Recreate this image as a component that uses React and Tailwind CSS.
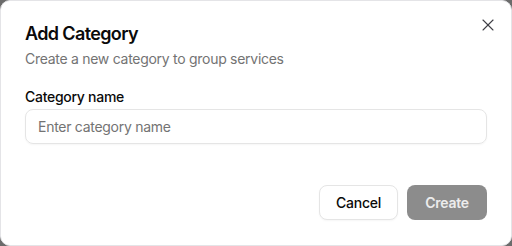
import React from "react";
import { X } from "lucide-react";

export default function App() {
  return (
    <div className="w-[512px] h-[246px] bg-[#6b6b6b]" style={{ fontFamily: "Inter, 'Liberation Sans', sans-serif" }}>
      <div className="relative w-full h-full bg-white rounded-[10px] border border-[#e4e4e7] flex flex-col px-6 pt-[20px] pb-[25px]">
        <button className="absolute right-[13px] top-[14px] text-[#3f3f46]">
          <X size={20} strokeWidth={1.3} />
        </button>
        <h2 className="text-[18px] leading-[26px] font-semibold text-[#0a0a0a] tracking-[-0.035em]">Add Category</h2>
        <p className="mt-[2px] text-[14px] leading-[20px] text-[#737373] tracking-[-0.02em]">Create a new category to group services</p>
        <label className="mt-[18px] text-[14px] leading-[20px] font-medium text-[#0a0a0a] tracking-[-0.02em]">Category name</label>
        <div className="mt-[2px] h-[35px] rounded-[8px] border border-[#e5e5e5] flex items-center px-3 text-[14px] text-[#737373] tracking-[-0.02em] shadow-[0_1px_2px_rgba(0,0,0,0.04)]">
          Enter category name
        </div>
        <div className="mt-auto flex justify-end gap-[9px]">
          <button className="h-[35px] w-[79px] rounded-[8px] border border-[#e5e5e5] bg-white text-[14px] font-medium text-[#0a0a0a] tracking-[-0.02em] shadow-[0_1px_2px_rgba(0,0,0,0.04)]">Cancel</button>
          <button className="h-[35px] w-[80px] rounded-[8px] bg-[#8c8c8c] text-[14px] font-semibold text-[#ececec] tracking-[-0.02em]">Create</button>
        </div>
      </div>
    </div>
  );
}
